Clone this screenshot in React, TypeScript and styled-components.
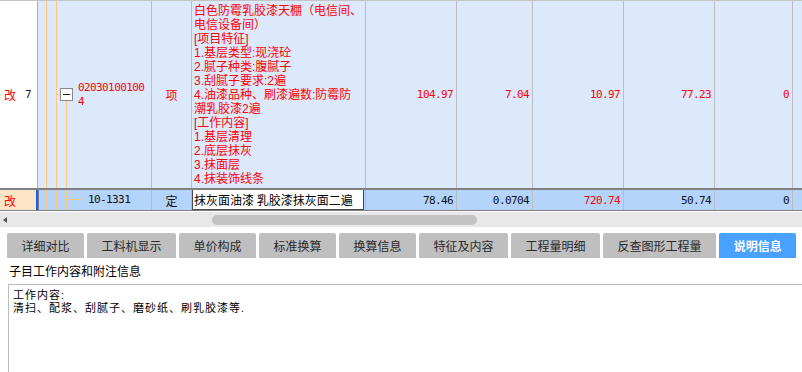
import React from 'react';
import styled, { createGlobalStyle } from 'styled-components';

const CJK = `"Noto Sans CJK SC", "Noto Sans", sans-serif`;
const TEXT = `"Liberation Sans", "Noto Sans CJK SC", sans-serif`;
const MONO = `"DejaVu Sans Mono", "Liberation Mono", monospace`;
const COLUMNS = '38px 114px 40px 174px 91px 76px 91px 91px 78px 9px';

const GlobalStyle = createGlobalStyle`
  html, body {
    margin: 0;
    padding: 0;
    background: #ffffff;
    overflow: hidden;
  }
  body {
    font-family: ${CJK};
    font-size: 12px;
    color: #000000;
  }
`;

const Screen = styled.div`
  display: flex;
  flex-direction: column;
  width: 802px;
  height: 372px;
  overflow: hidden;
`;

const Table = styled.div`
  border-top: 1px solid #c4c4c4;
`;

const Row = styled.div<{ $selected?: boolean }>`
  display: grid;
  grid-template-columns: ${COLUMNS};
  box-sizing: border-box;
  height: ${(p) => (p.$selected ? '23px' : '187px')};
  background: ${(p) => (p.$selected ? '#b4d4fc' : '#dce9fc')};
  border-top: ${(p) => (p.$selected ? '2px solid #7f7f7f' : 'none')};
  border-bottom: ${(p) => (p.$selected ? '1px solid #7f7f7f' : 'none')};
`;

const Cell = styled.div<{ $justify?: string }>`
  display: flex;
  align-items: center;
  justify-content: ${(p) => p.$justify || 'flex-start'};
  box-sizing: border-box;
  min-width: 0;
  overflow: hidden;
  border-right: 1px solid #bdbdbd;
`;

const MarkCell = styled(Cell)<{ $current?: boolean }>`
  gap: 9px;
  padding-left: 4px;
  background: ${(p) => (p.$current ? '#fde5c8' : '#ffffff')};
  border-right: ${(p) => (p.$current ? '2px solid #1a5cf5' : '1px solid #b0b0b0')};
`;

const CodeCell = styled(Cell)<{ $framed?: boolean }>`
  align-items: stretch;
  box-shadow: ${(p) => (p.$framed ? 'inset 1px 0 0 #7f7f7f' : 'none')};
`;

const CodeText = styled.div<{ $red?: boolean }>`
  align-self: center;
  font-family: ${MONO};
  font-size: 11px;
  letter-spacing: -0.6px;
  line-height: 14px;
  color: ${(p) => (p.$red ? '#ff0000' : '#111111')};
`;

const Changed = styled.span`
  color: #ff0000;
  font-size: 12px;
`;

const Index = styled.span`
  font-family: ${MONO};
  font-size: 11px;
  color: #222222;
`;

const Unit = styled.span<{ $red?: boolean }>`
  font-size: 12px;
  color: ${(p) => (p.$red ? '#ff0000' : '#111111')};
`;

const Description = styled.div`
  padding-left: 2px;
  color: #ff0000;
  font-family: ${TEXT};
  font-size: 12px;
  line-height: 14px;
`;

const Line = styled.div`
  white-space: nowrap;
`;

const EditCell = styled(Cell)`
  align-items: stretch;
  padding-right: 1px;
`;

const EditBox = styled.div`
  display: flex;
  align-items: center;
  flex: 1;
  box-sizing: border-box;
  padding-left: 1px;
  background: #ffffff;
  border: 1px solid #4a4a4a;
  border-top: none;
  white-space: nowrap;
  font-size: 12px;
`;

const Num = styled(Cell)<{ $red?: boolean }>`
  justify-content: flex-end;
  padding-right: 3px;
  font-family: ${MONO};
  font-size: 11px;
  letter-spacing: -0.6px;
  color: ${(p) => (p.$red ? '#ff0000' : '#111111')};
`;

const Filler = styled.div``;

const HScroll = styled.div`
  display: flex;
  align-items: center;
  height: 15px;
  margin-top: 1px;
  background: #e8e8e8;
`;

const ArrowLeft = styled.span`
  width: 0;
  height: 0;
  margin-left: 3px;
  border-top: 3.5px solid transparent;
  border-bottom: 3.5px solid transparent;
  border-right: 4px solid #555555;
`;

const Thumb = styled.div`
  width: 265px;
  height: 10px;
  margin-left: 205px;
  border-radius: 5px;
  background: #c2c2c2;
`;

const TabBar = styled.div`
  display: flex;
  gap: 3px;
  height: 25px;
  margin-top: 6px;
  padding-left: 7px;
`;

const Tab = styled.div<{ $active?: boolean }>`
  display: flex;
  align-items: center;
  padding: 0 14.5px;
  border-radius: 2px 2px 0 0;
  background: ${(p) => (p.$active ? '#48a0ff' : '#bfbfbf')};
  color: ${(p) => (p.$active ? '#ffffff' : '#2a2a2a')};
  font-weight: ${(p) => (p.$active ? 700 : 400)};
  font-size: 12px;
  white-space: nowrap;
`;

const Caption = styled.div`
  margin: 6px 0 0 9px;
  font-size: 12px;
  line-height: 14px;
`;

const NoteBox = styled.div`
  flex: 1;
  margin: 6px 0 0 8px;
  padding: 4px 4px;
  border-top: 1px solid #bcbcbc;
  border-left: 1px solid #bcbcbc;
  font-family: ${TEXT};
  font-size: 11px;
  letter-spacing: 1px;
  line-height: 12.5px;
`;

const TREE = '#ffc77a';

const ItemTree = () => (
  <svg width="40" height="187" viewBox="0 0 40 187">
    <line x1="8.5" y1="0" x2="8.5" y2="187" stroke={TREE} />
    <line x1="18.5" y1="0" x2="18.5" y2="187" stroke={TREE} />
    <line x1="18.5" y1="93.5" x2="22" y2="93.5" stroke={TREE} />
    <line x1="28.5" y1="99.5" x2="28.5" y2="187" stroke={TREE} />
    <rect x="22.5" y="87.5" width="12" height="12" fill="#ffffff" stroke="#8a8a8a" />
    <line x1="25" y1="93.5" x2="32" y2="93.5" stroke="#222222" />
  </svg>
);

const LeafTree = () => (
  <svg width="50" height="20" viewBox="0 0 50 20">
    <line x1="8.5" y1="0" x2="8.5" y2="20" stroke={TREE} />
    <line x1="18.5" y1="0" x2="18.5" y2="20" stroke={TREE} />
    <line x1="28.5" y1="0" x2="28.5" y2="20" stroke={TREE} />
    <line x1="29" y1="9.5" x2="44" y2="9.5" stroke={TREE} />
  </svg>
);

const description = [
  '白色防霉乳胶漆天棚（电信间、',
  '电信设备间）',
  '[项目特征]',
  '1.基层类型:现浇砼',
  '2.腻子种类:腹腻子',
  '3.刮腻子要求:2遍',
  '4.油漆品种、刷漆遍数:防霉防',
  '潮乳胶漆2遍',
  '[工作内容]',
  '1.基层清理',
  '2.底层抹灰',
  '3.抹面层',
  '4.抹装饰线条',
];

const itemValues = ['104.97', '7.04', '10.97', '77.23', '0'];
const quotaValues = [
  { v: '78.46' },
  { v: '0.0704' },
  { v: '720.74', red: true },
  { v: '50.74' },
  { v: '0' },
];

const tabs = [
  '详细对比',
  '工料机显示',
  '单价构成',
  '标准换算',
  '换算信息',
  '特征及内容',
  '工程量明细',
  '反查图形工程量',
  '说明信息',
];

export default function App() {
  return (
    <>
      <GlobalStyle />
      <Screen>
        <Table>
          <Row>
            <MarkCell>
              <Changed>改</Changed>
              <Index>7</Index>
            </MarkCell>
            <CodeCell>
              <ItemTree />
              <CodeText $red>
                02030100100
                <br />4
              </CodeText>
            </CodeCell>
            <Cell $justify="center">
              <Unit $red>项</Unit>
            </Cell>
            <Cell>
              <Description>
                {description.map((line) => (
                  <Line key={line}>{line}</Line>
                ))}
              </Description>
            </Cell>
            {itemValues.map((v, i) => (
              <Num key={i} $red>
                {v}
              </Num>
            ))}
            <Filler />
          </Row>

          <Row $selected>
            <MarkCell $current>
              <Changed>改</Changed>
            </MarkCell>
            <CodeCell $framed>
              <LeafTree />
              <CodeText>10-1331</CodeText>
            </CodeCell>
            <Cell $justify="center">
              <Unit>定</Unit>
            </Cell>
            <EditCell>
              <EditBox>抹灰面油漆 乳胶漆抹灰面二遍</EditBox>
            </EditCell>
            {quotaValues.map((q, i) => (
              <Num key={i} $red={q.red}>
                {q.v}
              </Num>
            ))}
            <Filler />
          </Row>
        </Table>

        <HScroll>
          <ArrowLeft />
          <Thumb />
        </HScroll>

        <TabBar>
          {tabs.map((t, i) => (
            <Tab key={t} $active={i === tabs.length - 1}>
              {t}
            </Tab>
          ))}
        </TabBar>

        <Caption>子目工作内容和附注信息</Caption>
        <NoteBox>
          工作内容:
          <br />
          清扫、配浆、刮腻子、磨砂纸、刷乳胶漆等.
        </NoteBox>
      </Screen>
    </>
  );
}
